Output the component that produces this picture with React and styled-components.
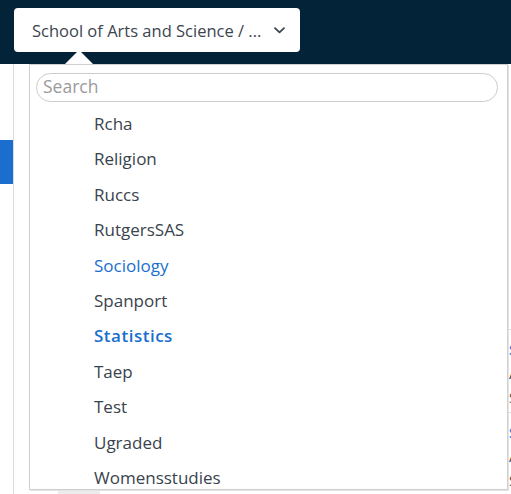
import styled, { createGlobalStyle } from "styled-components";

const GlobalStyle = createGlobalStyle`
  html, body {
    margin: 0;
    padding: 0;
    background: #ffffff;
    font-family: "Open Sans", "Liberation Sans", sans-serif;
  }
  * {
    box-sizing: border-box;
  }
`;

const Page = styled.div`
  position: relative;
  height: 494px;
  overflow: hidden;
  display: flex;
  flex-direction: column;
`;

const Header = styled.header`
  height: 64px;
  flex: none;
  background: #032339;
  padding: 8px 14px;
  display: flex;
  align-items: flex-start;
`;

const Picker = styled.button`
  width: 286px;
  height: 44px;
  border: none;
  border-radius: 4px;
  background: #ffffff;
  padding: 0 15px 0 18px;
  display: flex;
  align-items: center;
  justify-content: space-between;
  font-family: inherit;
  font-size: 16.5px;
  color: #3b4550;
  cursor: pointer;
`;

const PickerLabel = styled.span`
  white-space: nowrap;
`;

const Body = styled.div`
  flex: 1;
  display: flex;
  position: relative;
`;

const Sidebar = styled.nav`
  width: 14px;
  flex: none;
  border-right: 1px solid #dcdcdc;
  padding-top: 32px;
  display: flex;
  flex-direction: column;
`;

const NavItem = styled.div`
  height: 44px;
  background: ${(p) => (p.active ? "#1a6fce" : "transparent")};
`;

const Main = styled.main`
  flex: 1;
  padding: 265px 0 0 481px;
  display: flex;
  flex-direction: column;
`;

const Row = styled.div`
  height: 83px;
  border-top: 1px solid #dedede;
  padding: 8px 0 0 14px;
  display: flex;
  flex-direction: column;
  gap: 2px;
  font-size: 15px;
  line-height: 22px;
`;

const RowLink = styled.span`
  color: #1a6fce;
  font-weight: 600;
`;

const RowText = styled.span`
  color: #444;
`;

const Shelf = styled.div`
  position: absolute;
  left: 58px;
  bottom: 0;
  width: 42px;
  height: 5px;
  background: #ececec;
`;

const Caret = styled.div`
  position: absolute;
  left: 65px;
  top: 50px;
  width: 0;
  height: 0;
  border-left: 14px solid transparent;
  border-right: 14px solid transparent;
  border-bottom: 14px solid #ffffff;
`;

const Dropdown = styled.div`
  position: absolute;
  left: 29px;
  top: 64px;
  width: 479px;
  height: 426px;
  background: #ffffff;
  border: 1px solid #cfcfcf;
  box-shadow: 1px 1px 0 #e4e4e4;
  overflow: hidden;
  display: flex;
  flex-direction: column;
`;

const SearchInput = styled.input`
  margin: 8px 9px 0 6px;
  height: 29px;
  flex: none;
  border: 1px solid #cccccc;
  border-radius: 15px;
  padding: 0 0 3px 6px;
  font-family: inherit;
  font-size: 17.5px;
  color: #333;
  outline: none;
  &::placeholder {
    color: #9a9a9a;
  }
`;

const OptionList = styled.ul`
  list-style: none;
  margin: 4px 0 0;
  padding: 0;
`;

const Option = styled.li`
  padding: 5px 0 5px 64px;
  font-size: 17px;
  line-height: 25.4px;
  color: ${(p) => (p.tone === "plain" ? "#39434d" : "#1a6fce")};
  font-weight: ${(p) => (p.tone === "selected" ? 600 : 400)};
  letter-spacing: ${(p) => (p.tone === "selected" ? "0.5px" : "normal")};
  white-space: nowrap;
`;

const options = [
  { name: "Rcha", tone: "plain" },
  { name: "Religion", tone: "plain" },
  { name: "Ruccs", tone: "plain" },
  { name: "RutgersSAS", tone: "plain" },
  { name: "Sociology", tone: "hover" },
  { name: "Spanport", tone: "plain" },
  { name: "Statistics", tone: "selected" },
  { name: "Taep", tone: "plain" },
  { name: "Test", tone: "plain" },
  { name: "Ugraded", tone: "plain" },
  { name: "Womensstudies", tone: "plain" },
];

function Chevron() {
  return (
    <svg width="11" height="7" viewBox="0 0 11 7" fill="none">
      <path
        d="M1 1.2 L5.5 5.4 L10 1.2"
        stroke="#3b4550"
        strokeWidth="1.8"
        strokeLinecap="round"
        strokeLinejoin="round"
      />
    </svg>
  );
}

export default function App() {
  return (
    <>
      <GlobalStyle />
      <Page>
        <Header>
          <Picker>
            <PickerLabel>School of Arts and Science / ...</PickerLabel>
            <Chevron />
          </Picker>
        </Header>
        <Body>
          <Sidebar>
            <NavItem />
            <NavItem active />
            <NavItem />
          </Sidebar>
          <Main>
            <Row>
              <RowLink>Sociology</RowLink>
              <RowText>Active</RowText>
              <RowText>Submitted</RowText>
            </Row>
            <Row>
              <RowLink>Statistics</RowLink>
              <RowText>Active</RowText>
              <RowText>Submitted</RowText>
            </Row>
          </Main>
          <Shelf />
        </Body>
        <Caret />
        <Dropdown>
          <SearchInput placeholder="Search" />
          <OptionList>
            {options.map((o) => (
              <Option key={o.name} tone={o.tone}>
                {o.name}
              </Option>
            ))}
          </OptionList>
        </Dropdown>
      </Page>
    </>
  );
}
